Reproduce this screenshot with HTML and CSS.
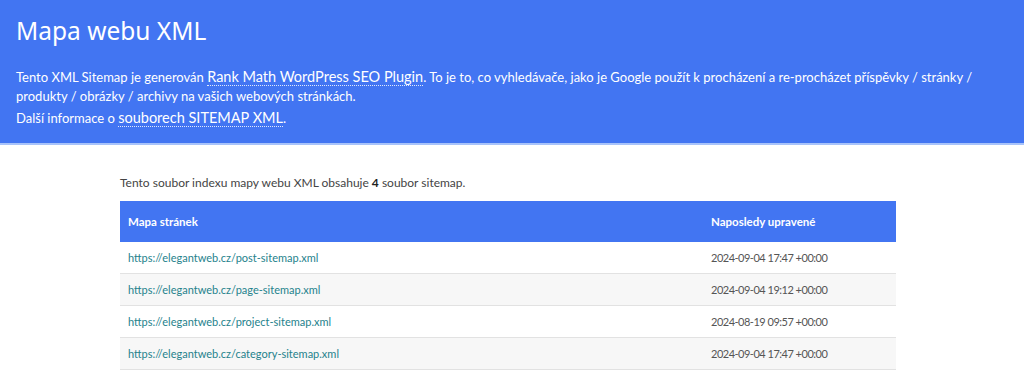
FILE: index.html
```html
<!DOCTYPE html>
<html lang="cs">
<head>
    <meta charset="UTF-8">
    <meta name="viewport" content="width=device-width, initial-scale=1.0">
    <title>Mapa webu XML</title>
    <link rel="stylesheet" href="styles.css">
</head>
<body>
    <header class="intro">
        <h1>Mapa webu XML</h1>
        <p>Tento XML Sitemap je generován <a href="#">Rank Math WordPress SEO Plugin</a>. To je to, co vyhledávače, jako je Google použít k procházení a re-procházet příspěvky / stránky / produkty / obrázky / archivy na vašich webových stránkách.</p>
        <p>Další informace o <a href="#">souborech SITEMAP XML</a>.</p>
    </header>
    <div class="content">
        <p class="summary">Tento soubor indexu mapy webu XML obsahuje <strong>4</strong> soubor sitemap.</p>
        <table class="sitemap">
            <thead>
                <tr>
                    <th class="col-loc">Mapa stránek</th>
                    <th class="col-mod">Naposledy upravené</th>
                </tr>
            </thead>
            <tbody>
                <tr>
                    <td><a href="#">https://elegantweb.cz/post-sitemap.xml</a></td>
                    <td class="date">2024-09-04 17:47 +00:00</td>
                </tr>
                <tr>
                    <td><a href="#">https://elegantweb.cz/page-sitemap.xml</a></td>
                    <td class="date">2024-09-04 19:12 +00:00</td>
                </tr>
                <tr>
                    <td><a href="#">https://elegantweb.cz/project-sitemap.xml</a></td>
                    <td class="date">2024-08-19 09:57 +00:00</td>
                </tr>
                <tr>
                    <td><a href="#">https://elegantweb.cz/category-sitemap.xml</a></td>
                    <td class="date">2024-09-04 17:47 +00:00</td>
                </tr>
            </tbody>
        </table>
    </div>
</body>
</html>
```

FILE: styles.css
```css
body {
    font-family: Lato, "Noto Sans", sans-serif;
    font-size: 13px;
    color: #444;
    margin: 0;
    padding: 0;
    background: #fff;
}
.intro {
    background-color: #4275f2;
    color: #fff;
    padding: 14px 16px 12px;
    border-bottom: 2px solid #a8c3fa;
}
.intro h1 {
    font-family: "Noto Sans", sans-serif;
    font-size: 24.5px;
    font-weight: normal;
    margin: 0 0 21px;
}
.intro p {
    margin: 0 0 3px;
    line-height: 19px;
}
.intro a {
    color: #fff;
    font-size: 14.5px;
    line-height: 18px;
    text-decoration: none;
    border-bottom: 1px dotted #dfe8fd;
}
.content {
    width: 776px;
    margin-left: 120px;
    padding-top: 30px;
}
.summary {
    font-size: 12px;
    margin: 0 0 11px;
}
.summary strong {
    color: #222;
}
.sitemap {
    width: 100%;
    border-collapse: collapse;
    font-size: 11px;
}
.sitemap th {
    background-color: #4275f2;
    color: #fff;
    text-align: left;
    font-size: 11.5px;
    font-weight: bold;
    padding: 12px 8px;
    height: 17px;
}
.sitemap .col-mod {
    width: 177px;
}
.sitemap td {
    padding: 7px 8px;
    height: 17px;
    border-bottom: 1px solid #e2e2e2;
    color: #555;
}
.sitemap .date {
    letter-spacing: -0.5px;
}
.sitemap tbody tr:nth-child(even) td {
    background-color: #f7f7f7;
}
.sitemap td a {
    color: #25828c;
    text-decoration: none;
}
```
